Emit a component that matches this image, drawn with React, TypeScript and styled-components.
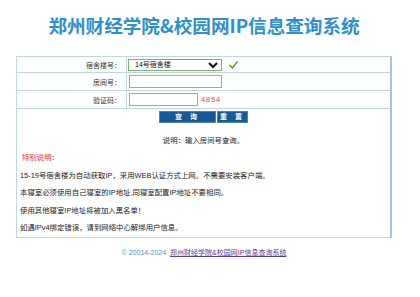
import styled, { createGlobalStyle } from "styled-components";

const GlobalStyle = createGlobalStyle`
    body {
        margin: 0;
        background: #ffffff;
        font-family: "Liberation Sans", "Noto Sans CJK SC", sans-serif;
        color: #222222;
    }
`;

const rules = [
    "15-19号宿舍楼为自动获取IP，采用WEB认证方式上网。不需要安装客户端。",
    "本寝室必须使用自己寝室的IP地址,同寝室配置IP地址不要相同。",
    "使用其他寝室IP地址将被加入黑名单！",
    "如遇IPv4绑定错误，请到网络中心解绑用户信息。",
];

export default function App() {
    return (
        <Page>
            <GlobalStyle/>
            <Title>郑州财经学院&amp;校园网IP信息查询系统</Title>
            <Panel>
                <FormRow $height={15}>
                    <Label>宿舍楼号：</Label>
                    <Field>
                        <Select defaultValue="14">
                            <option value="14">14号宿舍楼</option>
                        </Select>
                        <Check viewBox="0 0 10 9">
                            <path d="M1 5 L3.8 7.8 L9 1" fill="none" stroke="#5b9e2c" strokeWidth="1.8"
                                  strokeLinecap="round"/>
                        </Check>
                    </Field>
                </FormRow>
                <FormRow $height={17}>
                    <Label>房间号：</Label>
                    <Field>
                        <Input $width={93}/>
                    </Field>
                </FormRow>
                <FormRow $height={17}>
                    <Label>验证码：</Label>
                    <Field>
                        <Input $width={69}/>
                        <Captcha>4854</Captcha>
                    </Field>
                </FormRow>
                <ButtonBar>
                    <Button $width={57}>查 询</Button>
                    <Button $width={31}>重 置</Button>
                </ButtonBar>
                <Note>说明：输入房间号查询。</Note>
                <Special>特别说明：</Special>
                {rules.map((r) => (
                    <Rule key={r}>{r}</Rule>
                ))}
            </Panel>
            <Footer>
                <span>© 20014-2024</span>
                <FooterLink href="#">郑州财经学院&amp;校园网IP信息查询系统</FooterLink>
            </Footer>
        </Page>
    );
}

const Page = styled.div`
    width: 420px;
    min-height: 297px;
`;

const Title = styled.h1`
    margin: 0;
    padding-top: 14px;
    width: 408px;
    text-align: center;
    font-family: "Noto Sans CJK SC", sans-serif;
    font-size: 18.6px;
    line-height: 22px;
    font-weight: 700;
    color: #2e8fcd;
`;

const Panel = styled.div`
    margin: 20px 0 0 16px;
    width: 376px;
    box-sizing: border-box;
    border: 1px solid #bcd6e6;
    border-right: 2px solid #a6c5da;
    padding-bottom: 5px;
    font-size: 7.4px;
`;

const FormRow = styled.div<{ $height: number }>`
    display: grid;
    grid-template-columns: 110px 1fr;
    height: ${(p) => p.$height}px;
    border-bottom: 1px solid #bcd6e6;
`;

const Label = styled.div`
    display: flex;
    align-items: center;
    justify-content: flex-end;
    padding-right: 5px;
    border-right: 1px solid #bcd6e6;
    color: #333333;
    font-size: 7px;
`;

const Field = styled.div`
    display: flex;
    align-items: center;
    padding-left: 1px;
`;

const Select = styled.select`
    width: 94px;
    height: 12px;
    box-sizing: border-box;
    border: 1px solid #7fb26a;
    padding: 0 0 0 2px;
    font-size: 7px;
    font-family: inherit;
    background: #ffffff;
    color: #111111;
    outline: none;
`;

const Check = styled.svg`
    width: 9px;
    height: 8px;
    margin-left: 7px;
`;

const Input = styled.input<{ $width: number }>`
    width: ${(p) => p.$width}px;
    height: 13px;
    margin-left: 1px;
    box-sizing: border-box;
    border: 1px solid #8aaccc;
    padding: 0;
    outline: none;
`;

const Captcha = styled.span`
    margin-left: 3px;
    color: #e0494a;
    font-size: 7.5px;
    letter-spacing: 0.8px;
`;

const ButtonBar = styled.div`
    display: flex;
    justify-content: center;
    gap: 1px;
    padding: 2px 0 0;
    height: 15px;
    box-sizing: border-box;
`;

const Button = styled.button<{ $width: number }>`
    width: ${(p) => p.$width}px;
    height: 12px;
    padding: 0;
    border: 1px solid #4a82b8;
    background: #175896;
    color: #ffffff;
    font-family: inherit;
    font-size: 7px;
    font-weight: 700;
    letter-spacing: 3px;
    line-height: 10px;
`;

const Note = styled.p`
    margin: 12px 0 0;
    text-align: center;
    line-height: 9px;
`;

const Special = styled.p`
    margin: 8px 0 0 5px;
    color: #ee2a2a;
    line-height: 9px;
`;

const Rule = styled.p`
    margin: 8.6px 0 0 3px;
    line-height: 9px;
`;

const Footer = styled.div`
    display: flex;
    justify-content: center;
    gap: 4px;
    margin: 10px 0 0 16px;
    width: 376px;
    font-size: 7px;
    line-height: 9px;
    color: #3a9bd9;
`;

const FooterLink = styled.a`
    color: #5b3b8f;
    text-decoration: underline;
`;
